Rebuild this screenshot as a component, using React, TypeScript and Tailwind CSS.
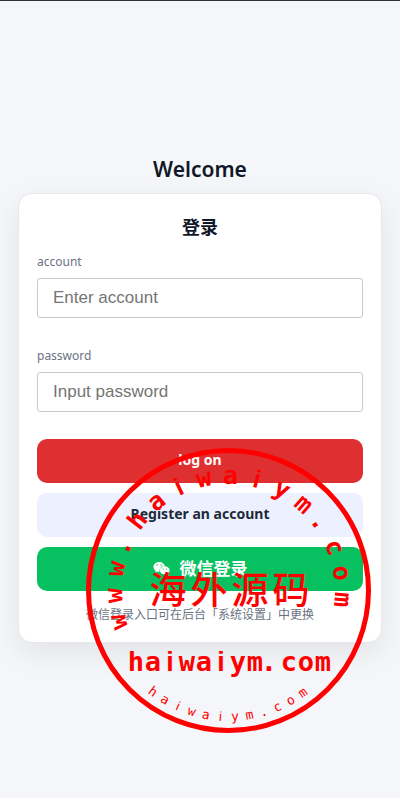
import { FormEvent, useState } from "react";
import { FaWeixin } from "react-icons/fa";

const RING_TOP = "www.haiwaiym.com".split("");
const SITE = "haiwaiym.com".split("");
const SEAL_NAME = "海外源码".split("");

const MONO = "'DejaVu Sans Mono', monospace";
const SANS = "'Liberation Sans', sans-serif";

// the mono "i" has slab serifs, the seal wants a plain one
function fontFor(char: string) {
  return char === "i" ? SANS : MONO;
}

// full stops hang to the left of their cell
function cellX(center: number, char: string) {
  return char === "." ? center - 3 : center;
}

function Seal() {
  return (
    <svg
      viewBox="0 0 285 285"
      aria-hidden="true"
      className="pointer-events-none absolute top-[447px] left-[86px] h-[285px] w-[285px] fill-[#ff0000]"
      textAnchor="middle"
    >
      <circle cx="142.5" cy="142.5" r="140" fill="none" stroke="#ff0000" strokeWidth="5" />

      {/* Upper ring */}
      <g fontSize="25" fontWeight="700">
        {RING_TOP.map((char, i) => (
          <text
            key={i}
            x={cellX(142, char)}
            y="36"
            fontFamily={fontFor(char)}
            transform={`rotate(${-105.6 + i * 13.36} 142.5 142.5)`}
          >
            {char}
          </text>
        ))}
      </g>

      {/* Name */}
      <text y="156" fontSize="37" fontWeight="500" fontFamily="STXingkai, KaiTi, 'Noto Sans CJK SC', sans-serif">
        {SEAL_NAME.map((char, i) => (
          <tspan key={i} x={82 + i * 41}>{char}</tspan>
        ))}
      </text>

      {/* Site */}
      <text y="223" fontSize="27" fontWeight="700">
        {SITE.map((char, i) => (
          <tspan key={i} x={cellX(50 + i * 17, char)} fontFamily={fontFor(char)}>{char}</tspan>
        ))}
      </text>

      {/* Lower ring */}
      <g fontSize="13">
        {SITE.map((char, i) => (
          <text
            key={i}
            x="143"
            y="273"
            fontFamily={fontFor(char)}
            transform={`rotate(${37 - i * 6.62} 142.5 142.5)`}
          >
            {char}
          </text>
        ))}
      </g>
    </svg>
  );
}

interface FieldProps {
  id: string;
  label: string;
  type: string;
  placeholder: string;
  value: string;
  onChange: (value: string) => void;
}

function Field({ id, label, type, placeholder, value, onChange }: FieldProps) {
  return (
    <div className="flex flex-col gap-1.5">
      <label htmlFor={id} className="text-xs leading-5 text-gray-500">{label}</label>
      <input
        id={id}
        type={type}
        placeholder={placeholder}
        value={value}
        onChange={e => onChange(e.target.value)}
        className="h-10 w-full rounded-[3px] border border-[#c8c8c8] bg-white px-[15px] font-['Liberation_Sans',sans-serif] text-[17px] text-gray-900 outline-none placeholder:text-[#757575]"
      />
    </div>
  );
}

export default function App() {
  const [account, setAccount] = useState("");
  const [password, setPassword] = useState("");

  function handleSubmit(e: FormEvent) {
    e.preventDefault();
  }

  return (
    <div className="relative flex min-h-screen flex-col justify-center overflow-hidden border-t border-[#333333] bg-[#f4f6fa] px-[18px] pb-0.5 font-['Noto_Sans','Noto_Sans_CJK_SC',sans-serif]">
      <main className="w-full">
        <h1 className="mb-2.5 text-center text-[21px] leading-7 font-semibold text-gray-900">Welcome</h1>

        <section className="rounded-[14px] border border-gray-200 bg-white px-[18px] pt-[21px] pb-[17px] shadow-[0_10px_30px_rgba(0,0,0,0.08)]">
          <h2 className="text-center text-lg leading-6 font-bold text-gray-900">登录</h2>

          <form onSubmit={handleSubmit} className="mt-[13px] flex flex-col gap-[27px]">
            <div className="flex flex-col gap-7">
              <Field id="account" label="account" type="text" placeholder="Enter account" value={account} onChange={setAccount} />
              <Field id="password" label="password" type="password" placeholder="Input password" value={password} onChange={setPassword} />
            </div>

            <div className="flex flex-col gap-2.5">
              <button type="submit" className="h-11 rounded-[10px] bg-[#de3031] pb-0.5 text-sm font-bold text-white">
                log on
              </button>
              <button type="button" className="h-11 rounded-[10px] bg-[#edf1ff] pb-0.5 text-sm font-bold text-gray-800">
                Register an account
              </button>
              <button type="button" className="flex h-11 items-center justify-center gap-2.5 rounded-[10px] bg-[#07c160] text-[17px] font-bold text-white">
                <FaWeixin size={17} />
                微信登录
              </button>
            </div>
          </form>

          <p className="mt-3.5 text-center text-xs leading-5 text-gray-500">微信登录入口可在后台「系统设置」中更换</p>
        </section>
      </main>

      <Seal />
    </div>
  );
}
